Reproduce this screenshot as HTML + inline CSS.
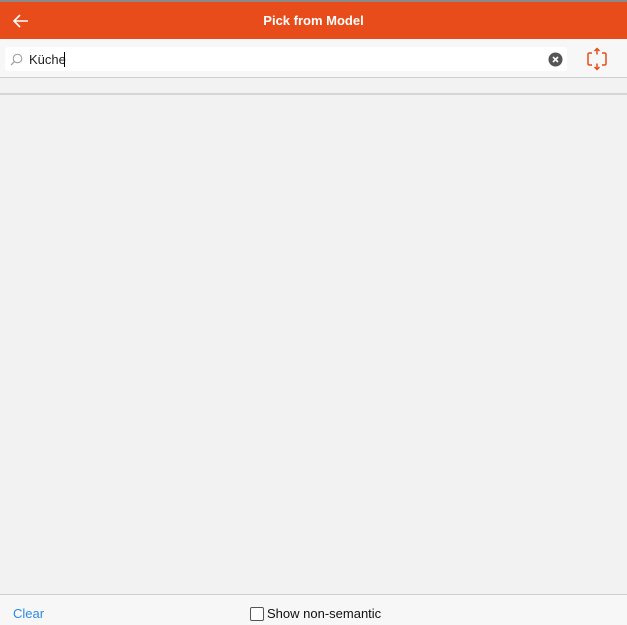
<!DOCTYPE html>
<html><head><meta charset="utf-8"><style>
body{margin:0;width:627px;height:624px;background:#f2f2f2;font-family:"Liberation Sans",sans-serif;position:relative;overflow:hidden}
.top{position:absolute;left:0;top:0;width:627px;height:2px;background:#8a8a8a}
.hdr{position:absolute;left:0;top:2px;width:627px;height:37px;background:#e84c1a;color:#fff;font-weight:bold;font-size:13px;text-align:center;line-height:37px}
.bar{position:absolute;left:0;top:39px;width:627px;height:38px;background:#f7f7f7;border-bottom:1px solid #cfcfcf}
.search{position:absolute;left:5px;top:8px;width:562px;height:24px;background:#fff;border-radius:3px}
.sub{position:absolute;left:0;top:78px;width:627px;height:15px;background:#f2f2f2;border-bottom:2px solid #d6d6d6}
.foot{position:absolute;left:0;top:594px;width:627px;height:30px;background:#f7f7f7;border-top:1px solid #cfcfcf;font-size:13px}
</style></head><body>
<div class="top"></div>
<div class="hdr">Pick from Model
<svg style="position:absolute;left:12px;top:11px" width="18" height="16" viewBox="0 0 18 16"><path d="M16 8H2M8 2L2 8l6 6" stroke="#fff" stroke-width="1.6" fill="none"/></svg>
</div>
<div class="bar">
<div class="search">
<svg style="position:absolute;left:5px;top:6px" width="13" height="13" viewBox="0 0 13 13"><circle cx="7.5" cy="5.5" r="4.3" stroke="#999" fill="none"/><path d="M4.5 8.5L1 12" stroke="#999" stroke-width="1.2"/></svg>
<span style="position:absolute;left:24px;top:5px;font-size:13px;color:#222">Küche</span>
<span style="position:absolute;left:59px;top:5px;width:1px;height:15px;background:#000"></span>
<svg style="position:absolute;left:543px;top:5px" width="15" height="15" viewBox="0 0 15 15"><circle cx="7.5" cy="7.5" r="7" fill="#555"/><path d="M5 5l5 5M10 5l-5 5" stroke="#fff" stroke-width="1.6"/></svg>
</div>
<svg style="position:absolute;left:585px;top:8px" width="24" height="24" viewBox="0 0 24 24" fill="none" stroke="#e84c1a" stroke-width="1.5"><path d="M7 6H4.5Q3 6 3 7.5v9Q3 18 4.5 18H7M17 6h2.5Q21 6 21 7.5v9Q21 18 19.5 18H17M12 1.5v6M9.5 4l2.5-2.5L14.5 4M12 22.5v-6M9.5 20l2.5 2.5 2.5-2.5"/></svg>
</div>
<div class="sub"></div>
<div class="foot">
<span style="position:absolute;left:13px;top:11px;color:#2b8ae6">Clear</span>
<span style="position:absolute;left:250px;top:12px;width:12px;height:12px;border:1px solid #555;border-radius:2px;background:#fff"></span>
<span style="position:absolute;left:267px;top:11px;color:#111">Show non-semantic</span>
</div>
</body></html>
